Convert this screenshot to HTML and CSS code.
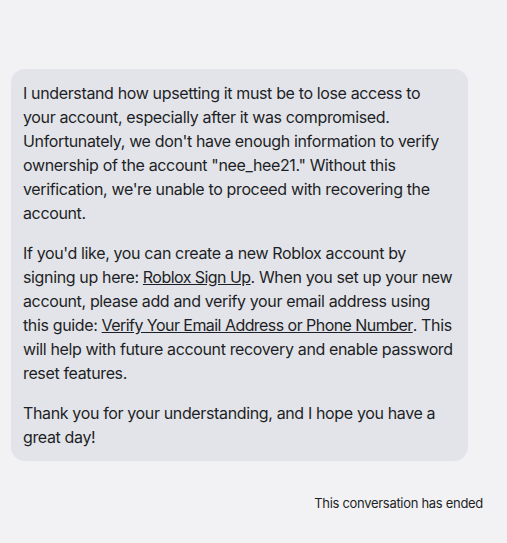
FILE: index.html
```html
<!DOCTYPE html>
<html>
<head>
<meta charset="utf-8">
<link rel="stylesheet" href="styles.css">
</head>
<body>
<div class="chat">
  <div class="bubble">
    <p>I understand how upsetting it must be to lose access to your account, especially after it was compromised. Unfortunately, we don't have enough information to verify ownership of the account "nee_hee21." Without this verification, we're unable to proceed with recovering the account.</p>
    <p>If you'd like, you can create a new Roblox account by signing up here: <a href="#">Roblox Sign Up</a>. When you set up your new account, please add and verify your email address using this guide: <a href="#">Verify Your Email Address or Phone Number</a>. This will help with future account recovery and enable password reset features.</p>
    <p>Thank you for your understanding, and I hope you have a great day!</p>
  </div>
  <div class="ended">This conversation has ended</div>
</div>
</body>
</html>
```
FILE: styles.css
```css
html, body {
  margin: 0;
  padding: 0;
  background: #f2f2f4;
}
body {
  font-family: Inter, "Noto Sans", sans-serif;
  color: #1d1f26;
}
.chat {
  padding: 69px 24px 0 11px;
  display: flex;
  flex-direction: column;
}
.bubble {
  width: 433px;
  background: #e3e4e9;
  border-radius: 14px;
  padding: 12px;
  font-size: 16px;
  line-height: 24px;
  letter-spacing: -0.36px;
}
.bubble p {
  margin: 0 0 16px;
}
.bubble p:last-child {
  margin-bottom: 0;
}
.bubble a {
  color: inherit;
  text-decoration: underline;
  letter-spacing: -0.55px;
}
.ended {
  align-self: flex-end;
  margin-top: 34px;
  font-size: 13px;
  line-height: 16px;
  letter-spacing: -0.3px;
}
```
